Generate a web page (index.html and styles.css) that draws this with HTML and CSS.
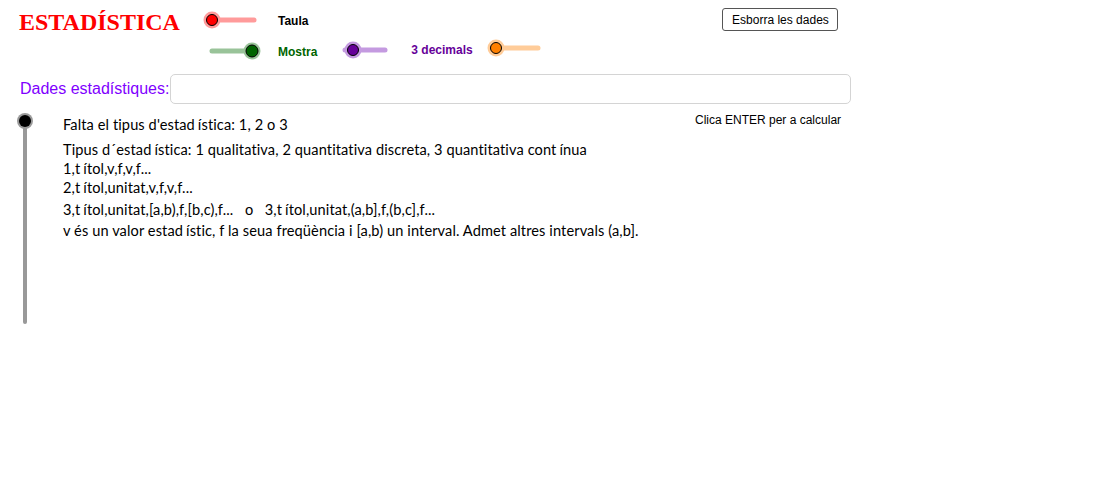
FILE: index.html
```html
<!DOCTYPE html>
<html lang="ca">
<head>
<meta charset="utf-8">
<title>ESTADÍSTICA</title>
<link rel="stylesheet" href="styles.css">
</head>
<body>
<div class="app">
  <div class="row1">
    <h1 class="title">ESTADÍSTICA</h1>
    <svg class="slider s-red" width="64" height="24" viewBox="0 0 64 24">
      <line x1="12" y1="12" x2="54" y2="12" stroke="#ff9b9b" stroke-width="5" stroke-linecap="round"/>
      <circle cx="12" cy="12" r="8.5" fill="#ff9b9b"/>
      <circle cx="12" cy="12" r="5.5" fill="#ff0000" stroke="#000" stroke-width="1"/>
    </svg>
    <span class="lbl taula">Taula</span>
    <button class="btn" type="button">Esborra les dades</button>
  </div>
  <div class="row2">
    <svg class="slider s-green" width="64" height="24" viewBox="0 0 64 24">
      <line x1="12" y1="12" x2="52" y2="12" stroke="#99c399" stroke-width="5" stroke-linecap="round"/>
      <circle cx="52" cy="12" r="8.5" fill="#99c399"/>
      <circle cx="52" cy="12" r="6" fill="#006400" stroke="#000" stroke-width="1"/>
    </svg>
    <span class="lbl mostra">Mostra</span>
    <svg class="slider s-purple" width="56" height="24" viewBox="0 0 56 24">
      <line x1="6" y1="11" x2="46" y2="11" stroke="#c49ae0" stroke-width="5" stroke-linecap="round"/>
      <circle cx="14" cy="11" r="8.5" fill="#c49ae0"/>
      <circle cx="14" cy="11" r="5.5" fill="#660099" stroke="#000" stroke-width="1"/>
    </svg>
    <span class="lbl decimals">3 decimals</span>
    <svg class="slider s-orange" width="64" height="24" viewBox="0 0 64 24">
      <line x1="10" y1="9" x2="52" y2="9" stroke="#ffcc99" stroke-width="5" stroke-linecap="round"/>
      <circle cx="10" cy="9" r="8.5" fill="#ffcc99"/>
      <circle cx="10" cy="9" r="5.5" fill="#ff8000" stroke="#000" stroke-width="1"/>
    </svg>
  </div>
  <div class="row3">
    <label class="dlabel" for="dades">Dades estadístiques:</label>
    <input class="dinput" id="dades" type="text">
  </div>
  <div class="main">
    <svg class="vslider" width="50" height="222" viewBox="0 0 50 222">
      <line x1="25" y1="17" x2="25" y2="218" stroke="#999" stroke-width="4" stroke-linecap="round"/>
      <circle cx="25" cy="17" r="8" fill="#9a9a9a"/>
      <circle cx="25" cy="17" r="6" fill="#000"/>
    </svg>
    <div class="text">
      <p class="l1">Falta el tipus d'estad<span class="acc">í</span>stica: 1, 2 o 3</p>
      <p class="l2">Tipus d´estad<span class="acc">í</span>stica: 1 qualitativa, 2 quantitativa discreta, 3 quantitativa cont<span class="acc">í</span>nua</p>
      <p class="l3">1,t<span class="acc">í</span>tol,v,f,v,f...</p>
      <p class="l4">2,t<span class="acc">í</span>tol,unitat,v,f,v,f...</p>
      <p class="l5">3,t<span class="acc">í</span>tol,unitat,[a,b),f,[b,c),f...&nbsp;&nbsp; o &nbsp;&nbsp;3,t<span class="acc">í</span>tol,unitat,(a,b],f,(b,c],f...</p>
      <p class="l6">v és un valor estad<span class="acc">í</span>stic, f la seua freqüència i [a,b) un interval. Admet altres intervals (a,b].</p>
    </div>
    <div class="hint">Clica ENTER per a calcular</div>
  </div>
</div>
</body>
</html>
```

FILE: styles.css
```css
html, body {
  margin: 0;
  padding: 0;
  background: #fff;
}
.app {
  width: 1100px;
  height: 500px;
  font-family: "Liberation Sans", Arial, sans-serif;
  overflow: hidden;
}
.row1 {
  display: flex;
  align-items: center;
  height: 24px;
  margin-top: 8px;
  padding-left: 19px;
}
.title {
  margin: 0;
  font-family: "Liberation Serif", "Times New Roman", serif;
  font-weight: bold;
  font-size: 24px;
  line-height: 24px;
  color: #ff0000;
  width: 181px;
  flex: none;
  white-space: nowrap;
  position: relative;
  top: 2px;
}
.slider {
  display: block;
  flex: none;
}
.lbl {
  font-weight: bold;
  font-size: 12px;
  line-height: 14px;
  white-space: nowrap;
}
.taula {
  color: #000;
  margin-left: 14px;
  position: relative;
  top: 1px;
}
.btn {
  margin-left: 414px;
  width: 116px;
  height: 23px;
  padding: 0;
  font-family: "Liberation Sans", Arial, sans-serif;
  font-size: 12px;
  color: #000;
  background: #fff;
  border: 1px solid #555;
  border-radius: 3px;
  position: relative;
  top: -0.5px;
}
.row2 {
  display: flex;
  align-items: center;
  height: 24px;
  margin-top: 7px;
  padding-left: 200px;
}
.mostra {
  color: #006400;
  margin-left: 14px;
  position: relative;
  top: 1px;
}
.s-purple {
  margin-left: 22px;
}
.decimals {
  color: #660099;
  margin-left: 16px;
  position: relative;
  top: -1px;
}
.s-orange {
  margin-left: 13px;
}
.row3 {
  display: flex;
  align-items: center;
  margin-top: 11px;
  padding-left: 20px;
}
.dlabel {
  font-size: 16px;
  color: #8000ff;
  line-height: 18px;
  margin-right: 1px;
}
.dinput {
  box-sizing: border-box;
  width: 681px;
  height: 30px;
  border: 1px solid #d4d4d4;
  border-radius: 5px;
  margin: 0;
  padding: 0 6px;
  font-size: 16px;
  outline: none;
}
.main {
  display: flex;
  align-items: flex-start;
}
.vslider {
  display: block;
  flex: none;
}
.text {
  width: 632px;
  flex: none;
  margin-left: 13px;
  padding-top: 13px;
  font-family: Lato, "Open Sans", sans-serif;
  font-size: 14.6px;
  letter-spacing: 0.1px;
  color: #000;
}
.text p {
  margin: 0;
  line-height: 16px;
  white-space: nowrap;
}
.text .l2 { margin-top: 9px; }
.text .l3 { margin-top: 3px; }
.text .l4 { margin-top: 3px; }
.text .l5 { margin-top: 6px; }
.text .l6 { margin-top: 5px; }
.acc {
  margin-left: 3px;
}
.hint {
  margin-top: 9px;
  font-size: 12px;
  line-height: 14px;
  color: #000;
  white-space: nowrap;
}
```
